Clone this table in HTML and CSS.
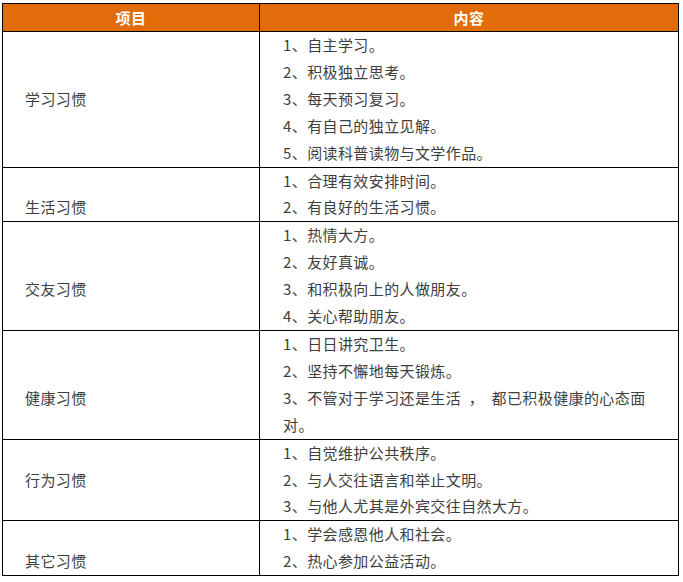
FILE: index.html
```html
<!DOCTYPE html>
<html lang="zh-CN">
<head>
<meta charset="utf-8">
<title>习惯</title>
<link rel="stylesheet" href="styles.css">
</head>
<body>
<table class="habits">
  <colgroup>
    <col class="col-item">
    <col class="col-content">
  </colgroup>
  <thead>
    <tr>
      <th>项目</th>
      <th>内容</th>
    </tr>
  </thead>
  <tbody>
    <tr>
      <td class="item">学习习惯</td>
      <td class="content">
        <div class="line">1、自主学习。</div>
        <div class="line">2、积极独立思考。</div>
        <div class="line">3、每天预习复习。</div>
        <div class="line">4、有自己的独立见解。</div>
        <div class="line">5、阅读科普读物与文学作品。</div>
      </td>
    </tr>
    <tr>
      <td class="item item-low">生活习惯</td>
      <td class="content">
        <div class="line">1、合理有效安排时间。</div>
        <div class="line">2、有良好的生活习惯。</div>
      </td>
    </tr>
    <tr>
      <td class="item item-low">交友习惯</td>
      <td class="content">
        <div class="line">1、热情大方。</div>
        <div class="line">2、友好真诚。</div>
        <div class="line">3、和积极向上的人做朋友。</div>
        <div class="line">4、关心帮助朋友。</div>
      </td>
    </tr>
    <tr>
      <td class="item item-low">健康习惯</td>
      <td class="content">
        <div class="line">1、日日讲究卫生。</div>
        <div class="line">2、坚持不懈地每天锻炼。</div>
        <div class="line">3、不管对于学习还是生活&nbsp;&nbsp;，&nbsp;&nbsp;都已积极健康的心态面对。</div>
      </td>
    </tr>
    <tr>
      <td class="item">行为习惯</td>
      <td class="content">
        <div class="line">1、自觉维护公共秩序。</div>
        <div class="line">2、与人交往语言和举止文明。</div>
        <div class="line">3、与他人尤其是外宾交往自然大方。</div>
      </td>
    </tr>
    <tr>
      <td class="item item-low">其它习惯</td>
      <td class="content">
        <div class="line">1、学会感恩他人和社会。</div>
        <div class="line">2、热心参加公益活动。</div>
      </td>
    </tr>
  </tbody>
</table>
</body>
</html>
```

FILE: styles.css
```css
html, body {
  margin: 0;
  padding: 0;
  background: #ffffff;
}

body {
  font-family: "Noto Sans CJK SC", "Microsoft YaHei", sans-serif;
  font-size: 15px;
  letter-spacing: 0.4px;
  color: #3e3e3e;
}

.habits {
  margin: 3px 0 0 2px;
  width: 677px;
  table-layout: fixed;
  border-collapse: collapse;
  border: 1px solid #000;
}

.col-item {
  width: 257px;
}

.habits th,
.habits td {
  border: 1px solid #000;
  padding: 0;
}

.habits th {
  background: #e36c0a;
  color: #ffffff;
  font-weight: bold;
  line-height: 27px;
  text-align: center;
}

.habits .item {
  vertical-align: middle;
  padding: 0 10px 0 22px;
  line-height: 26.9px;
}

.habits .item-low {
  padding-top: 26.9px;
}

.habits .content {
  vertical-align: top;
  padding: 0 18px 0 23px;
}

.line {
  line-height: 26.9px;
}
```
